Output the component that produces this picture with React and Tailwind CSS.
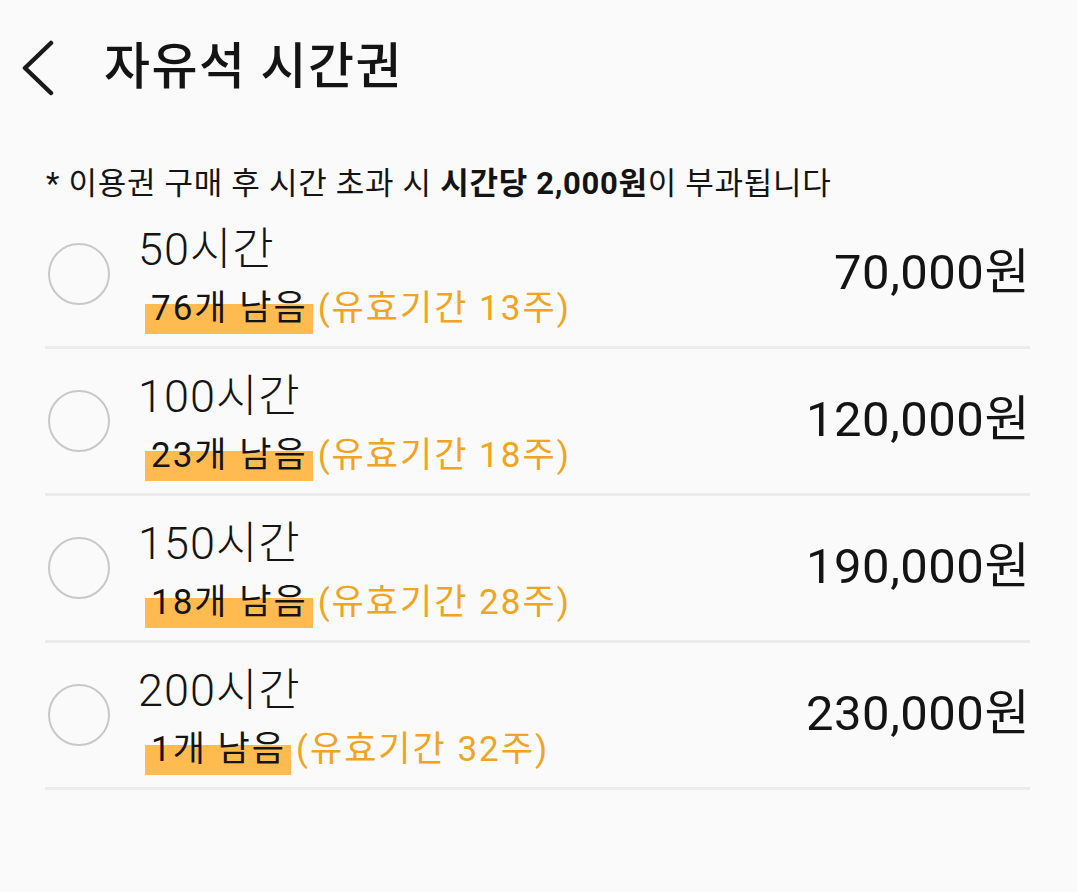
import React from "react";

const items = [
  { name: "50시간", left: "76개 남음", period: "(유효기간 13주)", price: "70,000원" },
  { name: "100시간", left: "23개 남음", period: "(유효기간 18주)", price: "120,000원" },
  { name: "150시간", left: "18개 남음", period: "(유효기간 28주)", price: "190,000원" },
  { name: "200시간", left: "1개 남음", period: "(유효기간 32주)", price: "230,000원" },
];

const font = { fontFamily: 'Roboto, "Noto Sans CJK KR", "Noto Sans", sans-serif' };

export default function App() {
  return (
    <div className="w-[1077px] h-[892px] bg-[#fafafa] text-[#141414] overflow-hidden" style={font}>
      <div className="flex items-center h-[136px] pl-[20px]">
        <svg width="36" height="56" viewBox="0 0 36 56" className="shrink-0">
          <path d="M31 3 L5 28 L31 53" fill="none" stroke="#1a1a1a" strokeWidth="4.5" strokeLinecap="round" strokeLinejoin="round" />
        </svg>
        <h1 className="ml-[48px] text-[50px] font-medium leading-none tracking-[1.5px] -mt-[2px]">자유석 시간권</h1>
      </div>
      <div className="pl-[46px] text-[31px] leading-none h-[66px] pt-[32px] tracking-[0.7px]">
        * 이용권 구매 후 시간 초과 시 <span className="font-bold">시간당 2,000원</span>이 부과됩니다
      </div>
      <div className="ml-[45px] mr-[47px]">
        {items.map((it) => (
          <div key={it.name} className="flex items-center h-[147px] border-b-[3px] border-[#ebebeb]">
            <div className="w-[62px] h-[62px] rounded-full border-[2px] border-[#c8c8c8] ml-[3px] shrink-0" />
            <div className="ml-[28px] flex flex-col flex-1 mt-[4px]">
              <div className="text-[45px] font-light leading-none tracking-[1px]">{it.name}</div>
              <div className="mt-[19px] ml-[7px] text-[35px] leading-none flex items-end tracking-[2px]">
                <span className="relative inline-block pl-[6px] pr-[5px]">
                  <span className="absolute left-0 right-0 bottom-[-8px] h-[30px] bg-[#ffbb4f]" />
                  <span className="relative">{it.left}</span>
                </span>
                <span className="ml-[5px] text-[#f0a422]">{it.period}</span>
              </div>
            </div>
            <div className="text-[49px] leading-none -mt-[4px] tracking-[0.5px]">{it.price}</div>
          </div>
        ))}
      </div>
    </div>
  );
}
